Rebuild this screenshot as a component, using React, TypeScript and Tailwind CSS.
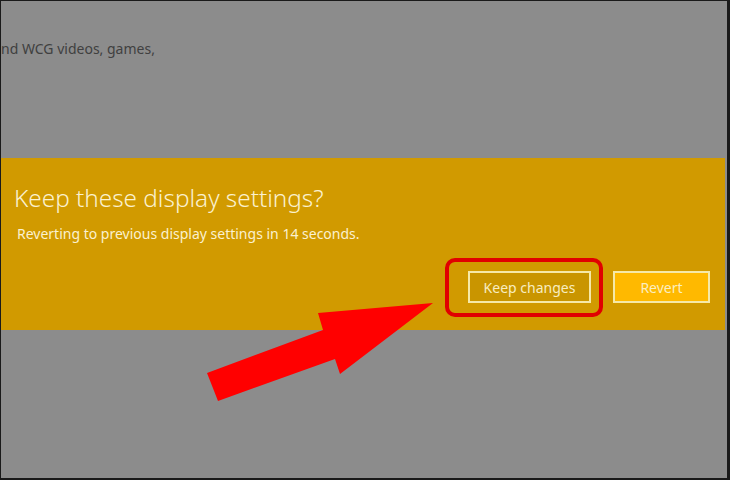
import React from "react";

const font = { fontFamily: '"Noto Sans", "Open Sans", "Liberation Sans", sans-serif' };

function Arrow() {
  return (
    <svg className="absolute left-0 top-0 pointer-events-none" width="730" height="480" viewBox="0 0 730 480">
      <polygon
        points="206,372 322,329 317,312 432,302 339,373 334,358 217,400"
        fill="#ff0000"
      />
    </svg>
  );
}

export default function App() {
  return (
    <div
      className="relative w-[730px] h-[480px] overflow-hidden bg-[#8c8c8c] border-l border-t border-r-[3px] border-b-2 border-[#1a1a1a] flex flex-col"
      style={font}
    >
      <div className="h-[157px] pt-[38px]">
        <p className="text-[14px] leading-5 text-[#404040] whitespace-nowrap">nd WCG videos, games,</p>
      </div>

      <div className="h-[172px] mr-[2px] bg-[#d19a00] pl-[13px] pt-[24px] pr-[15px] flex flex-col">
        <h2 className="text-[24.3px] leading-[32px] font-light text-[#fbf1cf] whitespace-nowrap">
          Keep these display settings?
        </h2>
        <p className="mt-[10px] pl-[3px] text-[14px] leading-5 text-[#fbf1cf] whitespace-nowrap">
          Reverting to previous display settings in 14 seconds.
        </p>

        <div className="mt-auto mb-[27px] flex justify-end gap-[22px]">
          <div className="relative">
            <button className="w-[123px] h-[32px] border-2 border-[#f6e9a8] bg-[#c99500] text-[14px] text-[#f8edc0]">
              Keep changes
            </button>
            <div className="absolute -left-[23px] -top-[13px] w-[158px] h-[59px] border-4 border-[#e10000] rounded-[10px]" />
          </div>
          <button className="w-[97px] h-[32px] border-2 border-[#f6e9a8] bg-[#ffb900] text-[14px] text-[#fbeec0]">
            Revert
          </button>
        </div>
      </div>

      <Arrow />
    </div>
  );
}
